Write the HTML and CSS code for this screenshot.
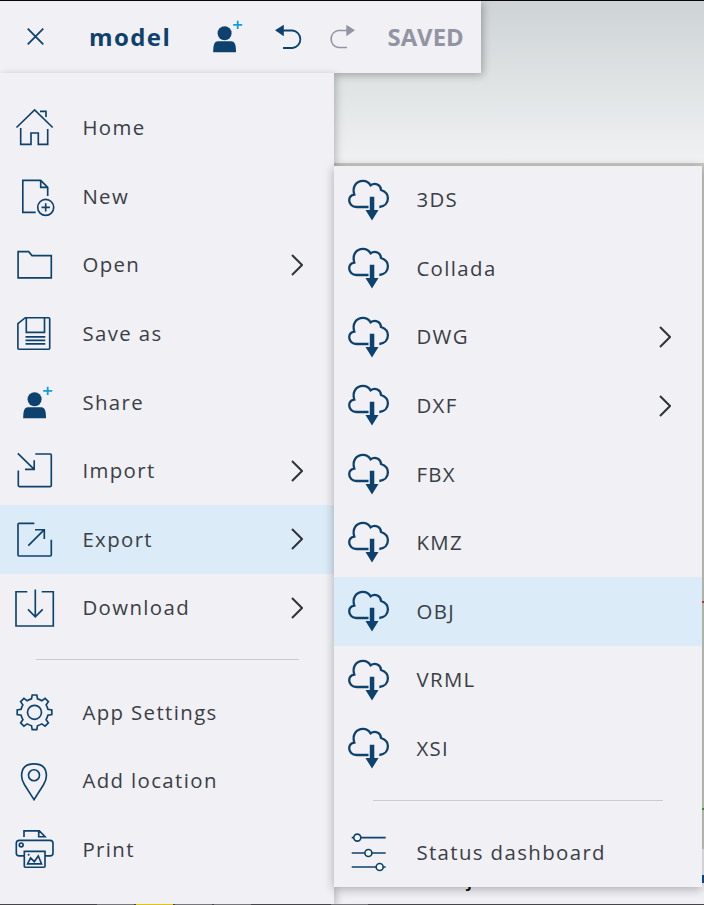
FILE: index.html
```html
<!DOCTYPE html>
<html lang="en">
<head>
<meta charset="utf-8">
<title>model</title>
<link rel="stylesheet" href="styles.css">
</head>
<body>
<svg class="defs" width="0" height="0">
  <symbol id="cloud" viewBox="0 0 68 68">
    <path class="thick" d="M34.5 41H22.5C18 41 15.2 37.8 15.2 34.3C15.2 31.5 17 29.2 20.3 28.6C18 21 22 14.8 29 14.8C32.5 14.8 35 16.6 36.6 19.3C41 16.3 46.8 18.7 47 24C51.5 25.5 53.9 28.5 53.9 32.3C53.9 37 50.5 40.5 45.3 41"/>
    <path class="solid" d="M35.8 30.8h4.5V44h4.2L38 54.6L31.5 44h4.3z"/>
  </symbol>
  <symbol id="user" viewBox="0 0 68 68">
    <circle class="solid" cx="34.6" cy="31.2" r="7"/>
    <path class="solid" d="M23.2 50.2C23.2 43.5 24 39.2 28 39.2H41.2C45.2 39.2 46 43.5 46 50.2z"/>
    <path class="plus" d="M43.2 22.9h9M47.7 18.7v8.4"/>
  </symbol>
  <symbol id="chevron" viewBox="0 0 12 22"><path d="M1 1L11 11L1 21"/></symbol>
</svg>
<div class="app">
  <main class="viewport">
    <div class="sky"></div>
    <div class="ground"><i class="axis red"></i><i class="axis green"></i></div>
    <footer class="status"><span class="hint">j</span><i class="field"></i></footer>
    <div class="taskbar"><i></i><i class="current"></i><i></i><i></i><i class="idle"></i><i class="idle"></i><i></i></div>
  </main>

  <header class="topbar">
    <svg class="close" viewBox="0 0 16 16"><path d="M.7 .7L15.3 15.3M15.3 .7L.7 15.3"/></svg>
    <strong class="title">model</strong>
    <svg class="invite"><use href="#user"/></svg>
    <svg class="undo" viewBox="0 0 28 26"><path class="solid" d="M0 6.3L8.8 .8V12.2z"/><path d="M8 6.5H17.5A8.8 8.8 0 0 1 17.5 24H8"/></svg>
    <svg class="redo" viewBox="0 0 28 26"><path class="solid" d="M26 6.3L17.3 .8V12.2z"/><path d="M18 6.5H9A8.7 8.7 0 0 0 9 23.5H18"/></svg>
    <strong class="saved">SAVED</strong>
  </header>

  <nav class="menu">
    <a class="row"><svg class="icon" viewBox="0 0 68 68"><path d="M16.5 34.5L34.6 17L52.7 34.5M40 18.3H46V24M20.7 35V51.3H31V40H38.3V51.3H47.7V36"/></svg><span>Home</span></a>
    <a class="row"><svg class="icon" viewBox="0 0 68 68"><path d="M35.7 50.4H22.8V18.3H40.7L47.7 25.3V34M40.7 18.3V25.3H47.7M45.7 41.2v8.4M41.5 45.4h8.4"/><circle cx="45.7" cy="45.4" r="8"/></svg><span>New</span></a>
    <a class="row"><svg class="icon" viewBox="0 0 68 68"><path d="M18.1 20.6H28.7L32 24.6H51.3V46.9H18.1z"/></svg><span>Open</span><svg class="chevron"><use href="#chevron"/></svg></a>
    <a class="row"><svg class="icon" viewBox="0 0 68 68"><path d="M17.9 24.7L25.3 18.7H48.7Q49.7 18.7 49.7 19.7V49.2Q49.7 50.2 48.7 50.2H18.9Q17.9 50.2 17.9 49.2zM26.3 18.7V33.3H44.5V18.7M25.5 37.8H45.3M25.5 41.4H45.3M25.5 44.9H45.3"/></svg><span>Save as</span></a>
    <a class="row"><svg class="icon"><use href="#user"/></svg><span>Share</span></a>
    <a class="row"><svg class="icon" viewBox="0 0 68 68"><path d="M17.8 17.3L34.2 33.3M25 33.3H34.2V24.3M35.3 18H50.3Q51.3 18 51.3 19V49.6Q51.3 50.6 50.3 50.6H19.3Q18.3 50.6 18.3 49.6V34.6"/></svg><span>Import</span><svg class="chevron"><use href="#chevron"/></svg></a>
    <a class="row active"><svg class="icon" viewBox="0 0 68 68"><path d="M34.3 18.3H19Q18 18.3 18 19.3V50Q18 51 19 51H50.3Q51.3 51 51.3 50V34.7M28.3 40.7L44.3 24.7M35 24.7H44.3V34"/></svg><span>Export</span><svg class="chevron"><use href="#chevron"/></svg></a>
    <a class="row"><svg class="icon" viewBox="0 0 68 68"><path d="M27.3 17.7H16V52H53.3V17.7H41.7M35.3 15.4V43M28 35.4L35.3 42.8L42.7 35.4"/></svg><span>Download</span><svg class="chevron"><use href="#chevron"/></svg></a>
    <hr>
    <a class="row"><svg class="icon" viewBox="0 0 68 68"><g transform="translate(34.5 34.3)"><circle r="7"/><path d="M-3-13.4L-2.3-17.3H2.3L3-13.4Q5.3-12.8 7.35-11.6L10.6-13.9L13.9-10.6L11.6-7.35Q12.8-5.3 13.4-3L17.3-2.3V2.3L13.4 3Q12.8 5.3 11.6 7.35L13.9 10.6L10.6 13.9L7.35 11.6Q5.3 12.8 3 13.4L2.3 17.3H-2.3L-3 13.4Q-5.3 12.8-7.35 11.6L-10.6 13.9L-13.9 10.6L-11.6 7.35Q-12.8 5.3-13.4 3L-17.3 2.3V-2.3L-13.4-3Q-12.8-5.3-11.6-7.35L-13.9-10.6L-10.6-13.9L-7.35-11.6Q-5.3-12.8-3-13.4z"/></g></svg><span>App Settings</span></a>
    <a class="row"><svg class="icon" viewBox="0 0 68 68"><path d="M34 52.6L24.5 37.8C22.6 34.7 21.6 32 21.6 28.8C21.6 20.5 26.5 16.8 34 16.8S46.4 20.5 46.4 28.8C46.4 32 45.4 34.7 43.5 37.8z"/><circle cx="34" cy="28.2" r="5.5"/></svg><span>Add location</span></a>
    <a class="row"><svg class="icon" viewBox="0 0 68 68"><path d="M24 22V15.8H39.3L45 21.7H38.7V15.8M24.3 40.9H19.3Q16.3 40.9 16.3 37.9V28.3Q16.3 25.3 19.3 25.3H50Q53 25.3 53 28.3V37.9Q53 40.9 50 40.9H45M24.3 36.3H45V51.2Q45 52.2 44 52.2H25.3Q24.3 52.2 24.3 51.2zM27.6 48.8L30.6 42.8L34.3 46.6L38.3 41L41.5 48.8z"/><circle cx="21.2" cy="29.9" r="1.9"/><circle class="solid" cx="28.6" cy="39.8" r="1"/></svg><span>Print</span></a>
  </nav>

  <nav class="submenu">
    <a class="row"><svg class="icon"><use href="#cloud"/></svg><span>3DS</span></a>
    <a class="row"><svg class="icon"><use href="#cloud"/></svg><span>Collada</span></a>
    <a class="row"><svg class="icon"><use href="#cloud"/></svg><span>DWG</span><svg class="chevron"><use href="#chevron"/></svg></a>
    <a class="row"><svg class="icon"><use href="#cloud"/></svg><span>DXF</span><svg class="chevron"><use href="#chevron"/></svg></a>
    <a class="row"><svg class="icon"><use href="#cloud"/></svg><span>FBX</span></a>
    <a class="row"><svg class="icon"><use href="#cloud"/></svg><span>KMZ</span></a>
    <a class="row active"><svg class="icon"><use href="#cloud"/></svg><span>OBJ</span></a>
    <a class="row"><svg class="icon"><use href="#cloud"/></svg><span>VRML</span></a>
    <a class="row"><svg class="icon"><use href="#cloud"/></svg><span>XSI</span></a>
    <hr>
    <a class="row"><svg class="icon" viewBox="0 0 68 68"><path d="M17.7 19.6H51.7M17.7 35H51.7M17.7 49H51.7"/><g class="knobs"><circle cx="23.3" cy="19.6" r="3.5"/><circle cx="34.4" cy="35" r="3.5"/><circle cx="45.7" cy="49" r="3.5"/></g></svg><span>Status dashboard</span></a>
  </nav>
</div>
</body>
</html>
```
FILE: styles.css
```css
* { box-sizing: border-box; }

body {
  margin: 0;
  font-family: "Open Sans", sans-serif;
  font-size: 20.4px;
  color: #3a3e45;
}

.defs { position: absolute; }

svg {
  display: block;
  flex: none;
  fill: none;
  stroke: #0e426e;
  stroke-width: 1.65;
}

.solid { fill: #0e426e; stroke: none; }
.thick { stroke-width: 2.3; }
.plus { stroke: #129cdb; stroke-width: 1.8; }

.app {
  position: relative;
  width: 704px;
  height: 905px;
  overflow: hidden;
  border-top: 1px solid #08060c;
}

/* Drawing area behind the menus */
.viewport {
  height: 904px;
  display: flex;
  flex-direction: column;
}

.sky {
  height: 162px;
  background: linear-gradient(#ced3d5, #dfe3e4 50%, #f0f1f3);
}

.ground {
  flex: 1;
  display: flex;
  flex-direction: column;
  align-items: flex-end;
  padding-top: 438px;
  background: #c9cbc3;
}

.axis { width: 2px; height: 2px; }
.red { background: #c93e3e; }
.green { background: #35a535; margin-top: 205px; }

.status {
  height: 55px;
  display: flex;
  justify-content: space-between;
  padding-left: 467px;
  background: #f1f0f5;
}

.hint {
  padding-top: 21px;
  font: 600 18px/20px "Open Sans", sans-serif;
  color: #000;
}

.field { width: 2px; height: 8px; margin-top: 26px; background: #0c4d92; }

.taskbar {
  position: relative;
  z-index: 1;
  height: 1px;
  display: flex;
  gap: 2px;
  padding-left: 97px;
  background: #45454a;
}

.taskbar i { width: 37px; background: #77777b; }
.taskbar .current { background: #e0c414; }
.taskbar .idle { background: #45454a; }

/* Menus */
.menu, .submenu {
  position: absolute;
  background: #f1f0f5;
}

.menu {
  top: 72px;
  left: 0;
  width: 334px;
  height: 831px;
  padding-top: 20.4px;
  box-shadow: 2px 2px 8px rgba(0, 0, 0, .24);
}

.submenu {
  top: 165px;
  left: 334px;
  width: 368px;
  height: 721px;
  box-shadow: 0 2px 10px rgba(0, 0, 0, .3);
}

.row {
  display: flex;
  align-items: center;
  height: 68.6px;
  letter-spacing: 1.38px;
  line-height: 28px;
}

.submenu .row:first-child { margin-top: -.6px; }

.active { background: #dbebf7; }

.icon { width: 68px; height: 68px; margin-bottom: .4px; }

.row span { margin-left: 14.4px; padding-bottom: .9px; flex: 1; }

.chevron {
  width: 12px;
  height: 22px;
  margin-right: 31px;
  stroke: #30343a;
  stroke-width: 2;
}

.submenu .chevron { margin-top: 1px; }

hr {
  height: 1px;
  margin: 17px 35px 17.8px 36px;
  border: 0;
  background: #c9cad2;
}

.submenu hr { margin: 17px 39px 17.6px 39px; }

.knobs { fill: #fff; }

/* Top toolbar */
.topbar {
  position: absolute;
  top: 0;
  left: 0;
  width: 481px;
  height: 72px;
  display: flex;
  align-items: center;
  padding-left: 27px;
  background: #f1f0f5;
  box-shadow: 2px 2px 8px rgba(0, 0, 0, .28);
}

.close { width: 17px; height: 17px; margin-bottom: 1px; }

.title {
  width: 81px;
  margin-left: 45px;
  margin-bottom: 2px;
  color: #0e426e;
  font-size: 24px;
  letter-spacing: 1.4px;
}

.invite { width: 68px; height: 68px; margin-left: 19.6px; margin-top: -2px; }
.undo { width: 28px; height: 26px; margin-left: 17.6px; stroke-width: 1.8; }
.redo { width: 28px; height: 26px; margin-left: 25.6px; stroke: #9294a3; }
.redo .solid { fill: #9294a3; }

.saved {
  margin-left: 30.7px;
  margin-bottom: 2px;
  color: #9294a3;
  font-size: 23.9px;
}
```
